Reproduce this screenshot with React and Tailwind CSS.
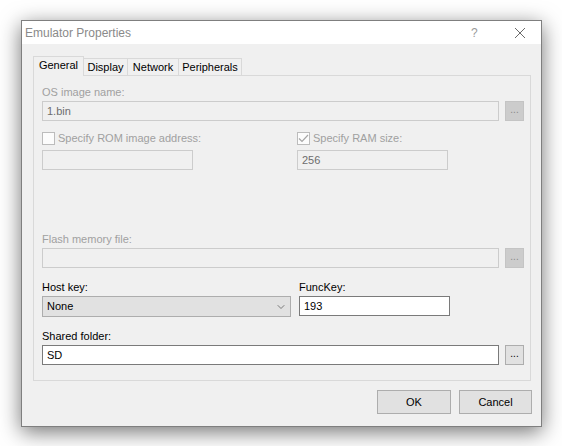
import { LuChevronDown } from 'react-icons/lu'

const font = { fontFamily: '"Liberation Sans", Arial, sans-serif' }

function Label({ children, disabled }) {
  return (
    <div className={`h-[17px] text-[11px] leading-[17px] ${disabled ? 'text-[#a0a0a0]' : 'text-black'}`}>
      {children}
    </div>
  )
}

function TextBox({ value, disabled, className = '' }) {
  return (
    <div
      className={`flex h-[20px] items-center border px-[4px] text-[11px] ${
        disabled ? 'border-[#cccccc] bg-[#f0f0f0] text-[#6d6d6d]' : 'border-[#7a7a7a] bg-white text-black'
      } ${className}`}
    >
      {value}
    </div>
  )
}

function BrowseButton({ disabled }) {
  return (
    <div
      className={`flex h-[20px] w-[19px] items-center justify-center border pb-[3px] text-[10px] ${
        disabled ? 'border-[#c4c4c4] bg-[#cccccc] text-[#8a8a8a]' : 'border-[#adadad] bg-[#e1e1e1] text-black'
      }`}
    >
      ...
    </div>
  )
}

function CheckBox({ label, checked }) {
  return (
    <div className="flex h-[17px] items-center gap-[3px]">
      <span className="flex h-[13px] w-[13px] items-center justify-center border border-[#bcbcbc] bg-[#fcfcfc]">
        {checked && (
          <svg width="11" height="9" viewBox="0 0 11 9" fill="none">
            <path d="M1 4.5 L4 7.5 L10 1" stroke="#a6a6a6" strokeWidth="1.2" />
          </svg>
        )}
      </span>
      <span className="text-[11px] text-[#a0a0a0]">{label}</span>
    </div>
  )
}

const tabs = [
  { name: 'General', width: 'w-[51px]' },
  { name: 'Display', width: 'w-[45px]' },
  { name: 'Network', width: 'w-[52px]' },
  { name: 'Peripherals', width: 'w-[64px]' },
]

function App() {
  return (
    <div className="h-[446px] w-[562px] bg-white pl-[21px] pt-[20px]" style={font}>
      <div className="flex h-[407px] w-[521px] flex-col border border-[#7f7f7f] bg-[#f0f0f0] shadow-[0_5px_20px_rgba(0,0,0,0.55)]">
        {/* title bar */}
        <div className="flex h-[23px] items-center bg-white">
          <span className="flex-1 pl-[3px] text-[12px] text-[#8a8a8a]">Emulator Properties</span>
          <span className="w-[14px] text-[12px] text-[#9a9a9a]">?</span>
          <span className="ml-[30px] mr-[16px] flex h-[10px] w-[10px]">
            <svg width="10" height="10" viewBox="0 0 10 10">
              <path d="M0 0 L10 10 M10 0 L0 10" stroke="#6a6a6a" strokeWidth="1" />
            </svg>
          </span>
        </div>

        <div className="flex flex-1 flex-col pl-[11px] pt-[12px]">
          <div className="flex h-[19px] items-end">
            {tabs.map((tab, i) =>
              i === 0 ? (
                <div
                  key={tab.name}
                  className={`relative z-10 -mb-px flex h-[20px] ${tab.width} items-center justify-center border border-b-0 border-[#d9d9d9] bg-[#f0f0f0] pb-[2px] text-[11px] text-black`}
                >
                  {tab.name}
                </div>
              ) : (
                <div
                  key={tab.name}
                  className={`-ml-px flex h-[17px] ${tab.width} items-center justify-center border border-b-0 border-[#d9d9d9] bg-[#f0f0f0] text-[11px] text-black`}
                >
                  {tab.name}
                </div>
              )
            )}
          </div>

          <div className="flex h-[306px] w-[498px] flex-col border border-[#d9d9d9] bg-[#f0f0f0] pl-[8px] pt-[8px]">
            <Label disabled>OS image name:</Label>
            <div className="flex items-center gap-[6px]">
              <TextBox value="1.bin" disabled className="w-[457px]" />
              <BrowseButton disabled />
            </div>

            <div className="mt-[9px] flex">
              <div className="w-[255px]">
                <CheckBox label="Specify ROM image address:" />
                <TextBox disabled className="mt-[3px] w-[151px]" />
              </div>
              <div>
                <CheckBox label="Specify RAM size:" checked />
                <TextBox value="256" disabled className="mt-[3px] w-[151px]" />
              </div>
            </div>

            <div className="mt-[61px]">
              <Label disabled>Flash memory file:</Label>
              <div className="flex items-center gap-[6px]">
                <TextBox disabled className="w-[457px]" />
                <BrowseButton disabled />
              </div>
            </div>

            <div className="mt-[11px] flex">
              <div className="w-[257px]">
                <Label>Host key:</Label>
                <div className="flex h-[21px] w-[249px] items-center justify-between border border-[#adadad] bg-[#e1e1e1] pl-[4px] pr-[3px] text-[11px] text-black">
                  None
                  <LuChevronDown className="h-[12px] w-[12px] text-[#555]" strokeWidth={1.5} />
                </div>
              </div>
              <div>
                <Label>FuncKey:</Label>
                <TextBox value="193" className="w-[151px]" />
              </div>
            </div>

            <div className="mt-[11px]">
              <Label>Shared folder:</Label>
              <div className="flex items-center gap-[6px]">
                <TextBox value="SD" className="w-[457px]" />
                <BrowseButton />
              </div>
            </div>
          </div>

          <div className="mt-[9px] flex justify-end gap-[8px] pr-[9px]">
            <button className="h-[24px] w-[74px] border border-[#adadad] bg-[#e1e1e1] text-[11px] text-black">OK</button>
            <button className="h-[24px] w-[73px] border border-[#adadad] bg-[#e1e1e1] text-[11px] text-black">Cancel</button>
          </div>
        </div>
      </div>
    </div>
  )
}

export default App
